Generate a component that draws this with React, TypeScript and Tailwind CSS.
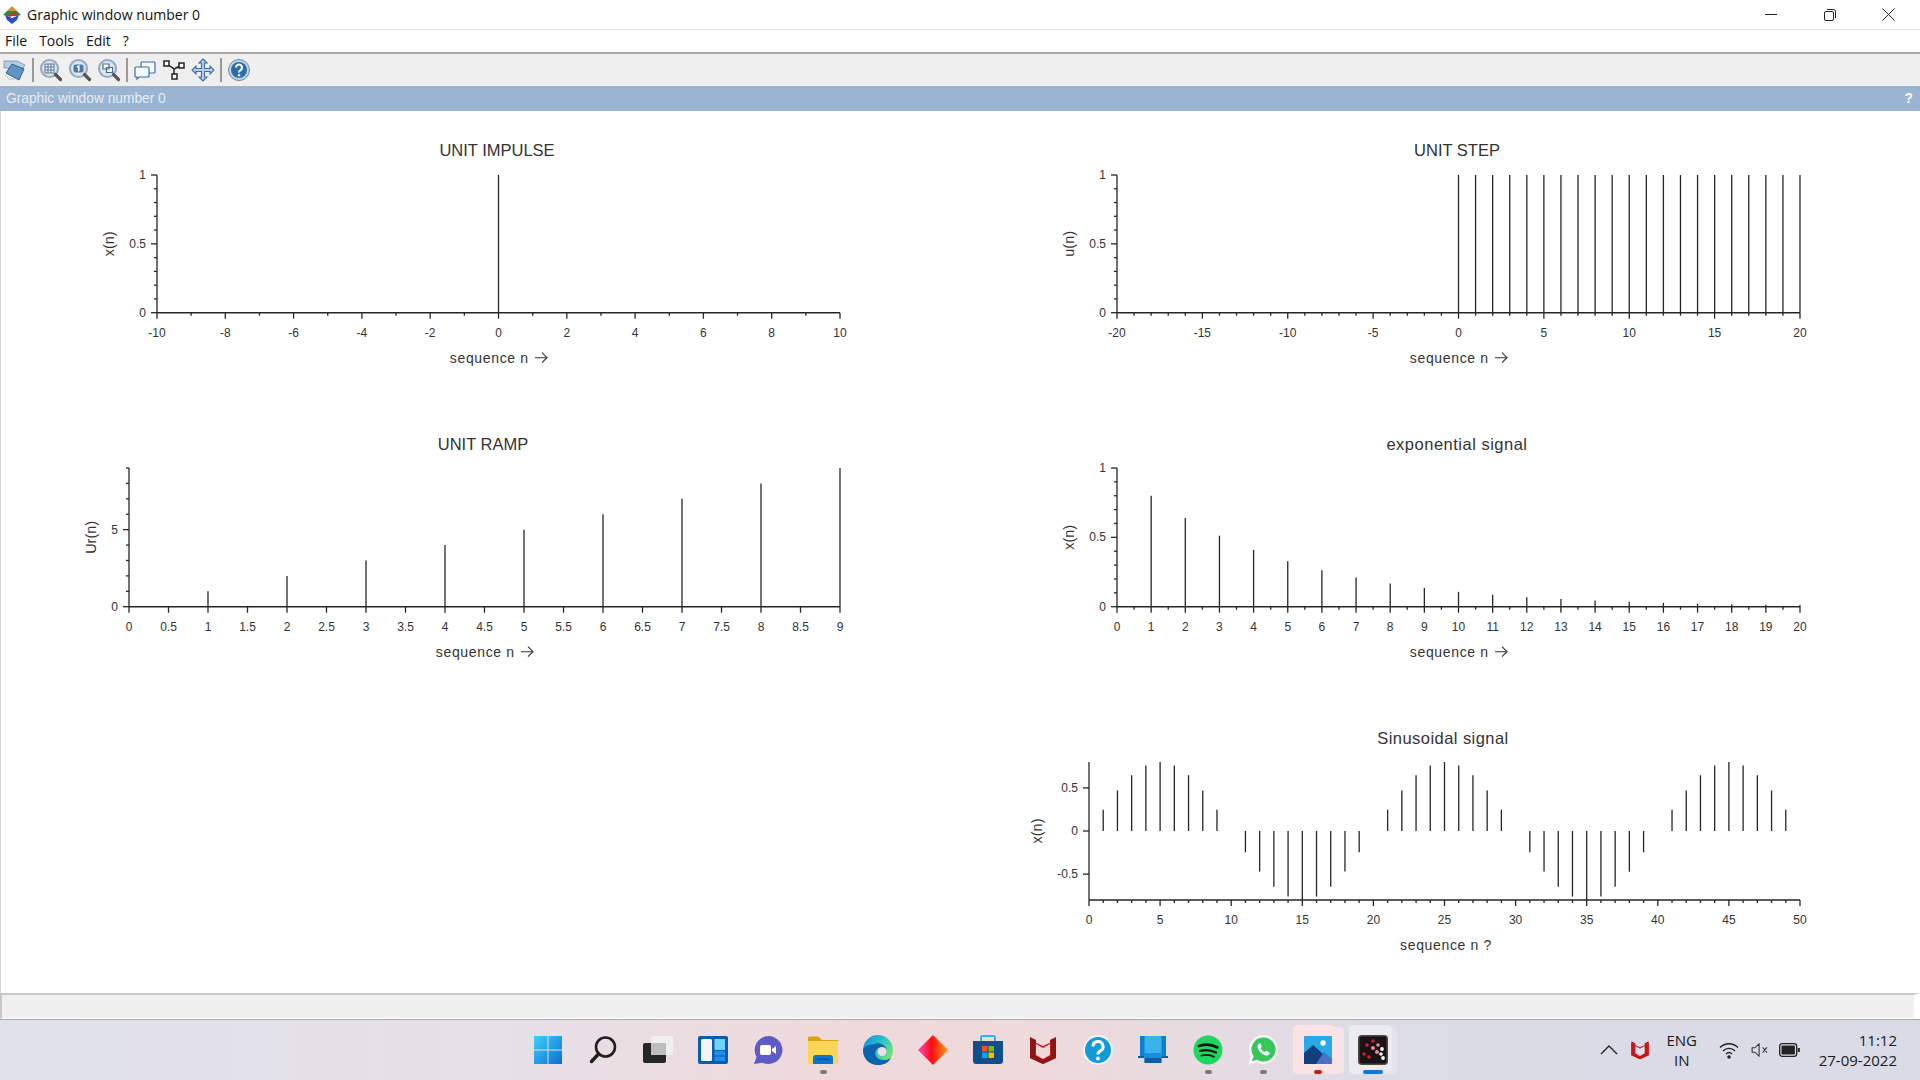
const SANS = '"Liberation Sans", Arial, sans-serif'

type Tick = { v: number; label?: string }

type Chart = {
  title: string
  titleX: number
  titleSpacing?: number
  xLabel: string
  xLabelX: number
  yLabel: string
  yLabelX: number
  x0: number
  x1: number
  xMin: number
  xMax: number
  xTicks: Tick[]
  yTop: number
  yBottom: number
  yMin: number
  yMax: number
  yTicks: Tick[]
  stems: [number, number][]
}

// every chart is drawn in a 960x294 cell, coordinates are local to the cell
function ticks(from: number, to: number, step: number, labelEvery: number): Tick[] {
  const out: Tick[] = []
  const n = Math.round((to - from) / step)
  for (let i = 0; i <= n; i++) {
    const v = from + i * step
    out.push(i % labelEvery === 0 ? { v, label: String(Math.round(v * 100) / 100) } : { v })
  }
  return out
}

function range(a: number, b: number) {
  const out: number[] = []
  for (let i = a; i <= b; i++) out.push(i)
  return out
}

const CHARTS: (Chart | null)[] = [
  {
    title: 'UNIT IMPULSE',
    titleX: 497,
    xLabel: 'sequence n',
    xLabelX: 498,
    yLabel: 'x(n)',
    yLabelX: 114,
    x0: 157,
    x1: 840,
    xMin: -10,
    xMax: 10,
    xTicks: ticks(-10, 10, 1, 2),
    yTop: 62,
    yBottom: 199.7,
    yMin: 0,
    yMax: 1,
    yTicks: ticks(0, 1, 0.1, 5),
    stems: [[0, 1]],
  },
  {
    title: 'UNIT STEP',
    titleX: 497,
    xLabel: 'sequence n',
    xLabelX: 498,
    yLabel: 'u(n)',
    yLabelX: 114,
    x0: 157,
    x1: 840,
    xMin: -20,
    xMax: 20,
    xTicks: ticks(-20, 20, 1, 5),
    yTop: 62,
    yBottom: 199.7,
    yMin: 0,
    yMax: 1,
    yTicks: ticks(0, 1, 0.1, 5),
    stems: range(0, 20).map(n => [n, 1] as [number, number]),
  },
  {
    title: 'UNIT RAMP',
    titleX: 483,
    xLabel: 'sequence n',
    xLabelX: 484,
    yLabel: 'Ur(n)',
    yLabelX: 96,
    x0: 129,
    x1: 840,
    xMin: 0,
    xMax: 9,
    xTicks: ticks(0, 9, 0.5, 1),
    yTop: 61,
    yBottom: 199.7,
    yMin: 0,
    yMax: 9,
    yTicks: ticks(0, 9, 1, 5).map(t => (t.v > 5 ? { v: t.v } : t)),
    stems: range(1, 9).map(n => [n, n] as [number, number]),
  },
  {
    title: 'exponential signal',
    titleX: 497,
    titleSpacing: 0.5,
    xLabel: 'sequence n',
    xLabelX: 498,
    yLabel: 'x(n)',
    yLabelX: 114,
    x0: 157,
    x1: 840,
    xMin: 0,
    xMax: 20,
    xTicks: ticks(0, 20, 0.5, 2),
    yTop: 61,
    yBottom: 199.7,
    yMin: 0,
    yMax: 1,
    yTicks: ticks(0, 1, 0.1, 5),
    stems: range(1, 20).map(n => [n, Math.pow(0.8, n)] as [number, number]),
  },
  null,
  {
    title: 'Sinusoidal signal',
    titleX: 483,
    titleSpacing: 0.45,
    xLabel: 'sequence n ?',
    xLabelX: 486,
    yLabel: 'x(n)',
    yLabelX: 82,
    x0: 129,
    x1: 840,
    xMin: 0,
    xMax: 50,
    xTicks: ticks(0, 50, 1, 5),
    yTop: 61,
    yBottom: 199,
    yMin: -0.8,
    yMax: 0.8,
    yTicks: [{ v: -0.5, label: '-0.5' }, { v: 0, label: '0' }, { v: 0.5, label: '0.5' }],
    stems: range(1, 49)
      .filter(n => n % 10 !== 0)
      .map(n => [n, 0.8 * Math.sin((2 * Math.PI * n) / 20)] as [number, number]),
  },
]

function Plot({ c }: { c: Chart }) {
  const sx = (v: number) => c.x0 + ((v - c.xMin) / (c.xMax - c.xMin)) * (c.x1 - c.x0)
  const sy = (v: number) => c.yBottom - ((v - c.yMin) / (c.yMax - c.yMin)) * (c.yBottom - c.yTop)
  const zeroY = sy(Math.max(0, c.yMin))
  const labelY = c.yBottom + 40.5
  const arrow = c.xLabel.endsWith('n')
  const labelCx = c.xLabelX
  return (
    <svg width="960" height="294" viewBox="0 0 960 294" className="block" style={{ fontFamily: SANS }}>
      <text x={c.titleX} y="43" textAnchor="middle" fontSize="16.5" letterSpacing={c.titleSpacing ?? 0} fill="#333">
        {c.title}
      </text>
      <text
        transform={`translate(${c.yLabelX} ${(c.yTop + c.yBottom) / 2}) rotate(-90)`}
        textAnchor="middle"
        fontSize="14.5"
        fill="#333"
      >
        {c.yLabel}
      </text>
      <g stroke="#262626" strokeWidth="1.3" fill="none">
        <line x1={c.x0} y1={c.yTop} x2={c.x0} y2={c.yBottom} />
        <line x1={c.x0} y1={c.yBottom} x2={c.x1} y2={c.yBottom} strokeWidth="1.6" />
        {c.xTicks.map(t => (
          <line key={t.v} x1={sx(t.v)} y1={c.yBottom} x2={sx(t.v)} y2={c.yBottom + (t.label ? 6 : 3)} />
        ))}
        {c.yTicks.map(t => (
          <line key={t.v} x1={c.x0} y1={sy(t.v)} x2={c.x0 - (t.label ? 6 : 3)} y2={sy(t.v)} />
        ))}
        {c.stems.map(([x, y]) => (
          <line key={x} x1={sx(x)} y1={zeroY} x2={sx(x)} y2={sy(y)} />
        ))}
      </g>
      <g fontSize="12" fill="#333">
        {c.xTicks
          .filter(t => t.label)
          .map(t => (
            <text key={t.v} x={sx(t.v)} y={c.yBottom + 24} textAnchor="middle">
              {t.label}
            </text>
          ))}
        {c.yTicks
          .filter(t => t.label)
          .map(t => (
            <text key={t.v} x={c.x0 - 11} y={sy(t.v) + 4} textAnchor="end">
              {t.label}
            </text>
          ))}
      </g>
      <text
        x={arrow ? labelCx - 8.7 : labelCx}
        y={labelY + 9.5}
        textAnchor="middle"
        fontSize="14"
        letterSpacing="0.65"
        fill="#333"
      >
        {c.xLabel}
      </text>
      {arrow && (
        <g stroke="#333" strokeWidth="1.1" fill="none">
          <path d={`M${labelCx + 37} ${labelY + 4.5}h12M${labelCx + 44} ${labelY - 0.5}l5 5-5 5`} />
        </g>
      )}
    </svg>
  )
}

function ToolbarIcon({ kind }: { kind: string }) {
  if (kind === 'rotate')
    return (
      <svg width="24" height="24" viewBox="0 0 24 24">
        <path d="M1 3h13l8 4-2 3H1z" fill="#b9cde0" stroke="#6f8fb0" strokeWidth="0.8" />
        <path d="M9 6l12 5-5 11L3 15z" fill="#5f93c4" stroke="#2f628f" />
        <path d="M2 17l4 4h6" stroke="#a9bdd1" fill="none" />
      </svg>
    )
  if (kind === 'windows')
    return (
      <svg width="24" height="24" viewBox="0 0 24 24" fill="#f6f9fc" stroke="#3b6fa3" strokeWidth="1.2">
        <rect x="8" y="4" width="14" height="11" rx="1" />
        <path d="M3 9h12a1 1 0 0 1 1 1v8a1 1 0 0 1-1 1H6l-2 2v-2H3a1 1 0 0 1-1-1v-8a1 1 0 0 1 1-1z" />
      </svg>
    )
  if (kind === 'nodes')
    return (
      <svg width="24" height="24" viewBox="0 0 24 24" fill="#fff" stroke="#222" strokeWidth="1.5">
        <path d="M5 6l7 5v7M12 11l8-4" fill="none" />
        <rect x="2" y="3" width="5" height="5" />
        <rect x="17" y="5" width="5" height="5" />
        <rect x="10" y="16" width="5" height="5" />
      </svg>
    )
  if (kind === 'move')
    return (
      <svg width="24" height="24" viewBox="0 0 24 24" fill="#b8cfe6" stroke="#3b6fa3" strokeWidth="1.1">
        <path d="M12 1l4 4h-2.500v5.500H19V8l4 4-4 4v-2.500h-5.500V19H16l-4 4-4-4h2.500v-5.500H5V16l-4-4 4-4v2.500h5.500V5H8z" />
      </svg>
    )
  if (kind === 'help')
    return (
      <svg width="24" height="24" viewBox="0 0 24 24">
        <circle cx="12" cy="12" r="10.500" fill="#c4d3e3" stroke="#6d8cab" />
        <circle cx="12" cy="12" r="8" fill="#2e6da8" />
        <path d="M9 9.500a3 3 0 1 1 4.500 2.600c-1 .6-1.500 1.100-1.500 2.400" stroke="#fff" strokeWidth="2" fill="none" />
        <circle cx="12" cy="17.300" r="1.200" fill="#fff" />
      </svg>
    )
  return (
    <svg width="24" height="24" viewBox="0 0 24 24">
      <circle cx="10.500" cy="10.500" r="8.500" fill="#dce6f0" stroke="#9aabbd" strokeWidth="2.200" />
      <path d="M16.500 16.500l5 5" stroke="#555" strokeWidth="3.200" strokeLinecap="round" />
      {kind === 'zoomGrid' && (
        <path d="M6 6h9v9H6zM9 6v9M12 6v9M6 9h9M6 12h9" fill="#eef3f8" stroke="#4c6c90" strokeWidth="0.900" />
      )}
      {kind === 'zoomOne' && (
        <>
          <rect x="5.500" y="6.500" width="10" height="8" rx="2" fill="#4f7aa6" />
          <path d="M9 9l1.800-.8v5" stroke="#fff" strokeWidth="1.500" fill="none" />
        </>
      )}
      {kind === 'zoomWin' && <path d="M6 6h6v5H6zM9.500 9.500h6v5h-6z" fill="#fff" stroke="#4c6c90" strokeWidth="1.200" />}
    </svg>
  )
}

function Sep() {
  return <div className="h-[24px] w-[2px] bg-[#9a9a9a]" />
}

function TaskIcon({ kind }: { kind: string }) {
  switch (kind) {
    case 'start':
      return (
        <svg width="30" height="30" viewBox="0 0 30 30">
          <defs>
            <linearGradient id="st" x1="0" y1="0" x2="1" y2="1">
              <stop offset="0" stopColor="#3fd0fb" />
              <stop offset="1" stopColor="#0a6fd0" />
            </linearGradient>
          </defs>
          <path d="M1 1h13.500v13.500H1zM15.500 1H29v13.500H15.500zM1 15.500h13.500V29H1zM15.500 15.500H29V29H15.500z" fill="url(#st)" />
        </svg>
      )
    case 'search':
      return (
        <svg width="30" height="30" viewBox="0 0 30 30" fill="none" stroke="#1f1f1f">
          <circle cx="17.500" cy="12" r="9.500" strokeWidth="2.600" />
          <path d="M10.500 19L3.500 26.500" strokeWidth="3.400" strokeLinecap="round" />
        </svg>
      )
    case 'taskview':
      return (
        <svg width="30" height="30" viewBox="0 0 30 30">
          <rect x="8" y="1" width="22" height="19" rx="2" fill="#efefef" />
          <rect x="0" y="8" width="23" height="20" rx="2" fill="#262626" />
          <rect x="8" y="8" width="15" height="12" fill="#bdbdbd" />
        </svg>
      )
    case 'widgets':
      return (
        <svg width="30" height="28" viewBox="0 0 30 28">
          <rect width="30" height="28" rx="2" fill="#0b5cad" />
          <rect x="3" y="3" width="11" height="22" rx="1.500" fill="#f4f4f4" />
          <rect x="16.500" y="3" width="10.500" height="11" fill="#6ed3fb" />
          <rect x="16.500" y="15" width="10.500" height="4.500" fill="#1e90ea" />
          <rect x="16.500" y="20.500" width="10.500" height="4.500" fill="#1e90ea" />
        </svg>
      )
    case 'chat':
      return (
        <svg width="30" height="30" viewBox="0 0 30 30">
          <path d="M15.500 1a14 14 0 1 1-6 26.700L1 29l2.500-7A14 14 0 0 1 15.500 1z" fill="#5e5bc8" />
          <rect x="7" y="10" width="11" height="10" rx="2" fill="#fff" />
          <path d="M19 14l4-3v8l-4-3z" fill="#fff" />
        </svg>
      )
    case 'explorer':
      return (
        <svg width="30" height="28" viewBox="0 0 30 28">
          <path d="M0 2a1.500 1.500 0 0 1 1.500-1.500h9L14 4h16v5H0z" fill="#e0a30c" />
          <rect y="5" width="30" height="23" rx="1" fill="#fbd558" />
          <path d="M5 28v-6a3 3 0 0 1 3-3h14a3 3 0 0 1 3 3v6z" fill="#0a76cf" />
          <rect x="9" y="22.500" width="12" height="1.500" fill="#0a4f95" />
        </svg>
      )
    case 'edge':
      return (
        <svg width="30" height="30" viewBox="0 0 30 30">
          <defs>
            <linearGradient id="ed" x1="0" y1="0" x2="1" y2="0.600">
              <stop offset="0" stopColor="#0c8fdc" />
              <stop offset="0.600" stopColor="#30c4c4" />
              <stop offset="1" stopColor="#7be36c" />
            </linearGradient>
          </defs>
          <circle cx="15" cy="15" r="15" fill="url(#ed)" />
          <path d="M0 15c0 9 7 15 15 15 6 0 10-2 13-7-3 2-8 3-12 1-4-2-5-7-2-10 3-2 8-2 10 1-2-6-8-8-13-6C5 10 1 11 0 15z" fill="#0b62ad" />
          <circle cx="19" cy="16.500" r="4.500" fill="#e8e0e6" />
        </svg>
      )
    case 'diamond':
      return (
        <svg width="30" height="30" viewBox="0 0 30 30">
          <defs>
            <linearGradient id="dm" x1="0" y1="0" x2="1" y2="0">
              <stop offset="0" stopColor="#f052c0" />
              <stop offset="0.450" stopColor="#ff0a14" />
              <stop offset="1" stopColor="#ff9b10" />
            </linearGradient>
          </defs>
          <path d="M15 0l15 15-15 15L0 15z" fill="url(#dm)" />
        </svg>
      )
    case 'store':
      return (
        <svg width="30" height="30" viewBox="0 0 30 30">
          <path d="M8 6V2.500A1.500 1.500 0 0 1 9.500 1h11A1.500 1.500 0 0 1 22 2.500V6" fill="none" stroke="#2bb6ea" strokeWidth="2" />
          <path d="M0 6h30v20a3 3 0 0 1-3 3H3a3 3 0 0 1-3-3z" fill="#0f4f8c" />
          <rect x="9" y="11" width="5.500" height="5.500" fill="#f25022" />
          <rect x="15.500" y="11" width="5.500" height="5.500" fill="#7fba00" />
          <rect x="9" y="17.500" width="5.500" height="5.500" fill="#00a4ef" />
          <rect x="15.500" y="17.500" width="5.500" height="5.500" fill="#ffb900" />
        </svg>
      )
    case 'mcafee':
      return <McAfee size={30} dark />
    case 'help':
      return (
        <svg width="30" height="30" viewBox="0 0 30 30">
          <circle cx="15" cy="15" r="15" fill="#f3f3f6" />
          <circle cx="15" cy="15" r="13" fill="#129ad6" />
          <path d="M10 11.500a5 5 0 1 1 7.500 4.300c-1.700 1-2.500 1.700-2.500 3.700" fill="none" stroke="#fff" strokeWidth="3" />
          <circle cx="15" cy="23.500" r="1.900" fill="#fff" />
        </svg>
      )
    case 'phone':
      return (
        <svg width="30" height="30" viewBox="0 0 30 30">
          <rect x="2" y="1" width="26" height="20" fill="#0b7fd4" />
          <rect x="0" y="21" width="30" height="2" fill="#0a5ea6" />
          <rect x="6.500" y="1" width="17" height="27" rx="1.500" fill="#39b3ea" />
          <rect x="6.500" y="18" width="17" height="5" fill="#1a8edc" />
          <rect x="6.500" y="23" width="17" height="5" fill="#0a5ea6" />
        </svg>
      )
    case 'spotify':
      return (
        <svg width="30" height="30" viewBox="0 0 30 30">
          <circle cx="15" cy="15" r="14.500" fill="#1ed760" />
          <g fill="none" stroke="#111" strokeLinecap="round">
            <path d="M6 11c6-2 13-1.500 18.500 1.500" strokeWidth="2.600" />
            <path d="M7 16c5-1.500 11-1 16 1.500" strokeWidth="2.200" />
            <path d="M8.500 20.500c4-1 9-.8 12.500 1.200" strokeWidth="1.800" />
          </g>
        </svg>
      )
    case 'whatsapp':
      return (
        <svg width="30" height="30" viewBox="0 0 30 30">
          <path d="M15.500 0a14.500 14.500 0 1 1-7 27.200L0 30l2.800-8.200A14.500 14.500 0 0 1 15.500 0z" fill="#f4f4f6" />
          <path d="M15.500 2.500a12 12 0 1 1-6.300 22.200L4 26.200l1.600-5A12 12 0 0 1 15.500 2.500z" fill="#35c75a" />
          <path d="M11 8.500c-1.500 1-2 3-1 5.300 1.400 3 3.700 5.200 6.700 6.400 2.300.8 4 .2 5-1.500l-.4-1.500-3-1.500-1.400 1.500c-2-.8-3.400-2.200-4.300-4.200l1.200-1.400-1.200-3.100z" fill="#fff" />
        </svg>
      )
    case 'photos':
      return (
        <svg width="28" height="28" viewBox="0 0 28 28">
          <rect width="28" height="28" rx="1" fill="#2aa9e8" />
          <circle cx="19" cy="7" r="2.700" fill="#fff" />
          <path d="M0 28V17l9-8 10 9-5 10z" fill="#113f7d" />
          <path d="M12 28l8-12 8 7v5z" fill="#4a72c4" />
        </svg>
      )
    default:
      return (
        <svg width="30" height="30" viewBox="0 0 30 30">
          <rect x="0.800" y="0.800" width="28.400" height="28.400" rx="3" fill="#1a1214" stroke="#4a4a4a" strokeWidth="1.600" />
          <g fill="#c8242c">
            <circle cx="15" cy="6" r="1.800" />
            <circle cx="9" cy="10" r="1.800" />
            <circle cx="6" cy="19" r="1.800" />
            <circle cx="11" cy="22" r="1.800" />
          </g>
          <g fill="#e78a99">
            <circle cx="15" cy="13" r="2" />
            <circle cx="20" cy="10" r="1.800" />
            <circle cx="19" cy="17" r="2" />
          </g>
          <g fill="#fff">
            <circle cx="24" cy="14" r="1.900" />
            <circle cx="23" cy="19" r="1.800" />
            <circle cx="25" cy="23" r="1.900" />
          </g>
        </svg>
      )
  }
}

function McAfee({ size, dark }: { size: number; dark?: boolean }) {
  return (
    <svg width={size} height={size} viewBox="0 0 30 30">
      <path d="M2 5l13 6 13-6v18l-13 6-13-6z" fill="#c8161d" />
      <path d="M2 2l6 3v3H7v13l8 4v4l-13-6zM28 2l-6 3v3h1v13l-8 4v4l13-6z" fill={dark ? '#8c1515' : '#c8161d'} />
      <path d="M8 9l7 4 7-4v11l-7 4-7-4z" fill={dark ? '#efd8d8' : '#dfe0ea'} />
    </svg>
  )
}

const TASK_ITEMS: { kind: string; dot?: string; tile?: string; sliver?: string }[] = [
  { kind: 'start' },
  { kind: 'search' },
  { kind: 'taskview' },
  { kind: 'widgets' },
  { kind: 'chat' },
  { kind: 'explorer', dot: 'w-[7px] bg-[#7a7a7a]' },
  { kind: 'edge' },
  { kind: 'diamond' },
  { kind: 'store' },
  { kind: 'mcafee' },
  { kind: 'help' },
  { kind: 'phone' },
  { kind: 'spotify', dot: 'w-[7px] bg-[#7a7a7a]' },
  { kind: 'whatsapp', dot: 'w-[7px] bg-[#7a7a7a]' },
  {
    kind: 'photos',
    dot: 'w-[8px] bg-[#c4211c]',
    tile: 'left-[2px] bg-[#fbe3e5]',
    sliver: 'left-[2px] w-[51px] bg-[#f6e4e6]',
  },
  {
    kind: 'scilab',
    dot: 'w-[20px] bg-[#0f78d4]',
    tile: 'left-[3px] bg-[#ecebf1]',
    sliver: 'left-[3px] w-[48px] bg-[#e5e4ec]',
  },
]

export default function App() {
  return (
    <div className="flex h-[1080px] w-[1920px] flex-col overflow-hidden bg-white" style={{ fontFamily: SANS }}>
      {/* Title bar */}
      <div className="flex h-[29px] shrink-0 items-center" style={{ fontFamily: '"Open Sans", sans-serif' }}>
        <svg width="18" height="18" viewBox="0 0 18 18" className="ml-[3px]">
          <path d="M9 0l5 5H4z" fill="#d8912a" />
          <path d="M4 5h10l4 4-4 1H4L0 9z" fill="#2b8a3e" />
          <path d="M2 9l7 3 7-3-2 5-5 4-5-4z" fill="#2a4fc0" />
          <path d="M5 9l8-3 1 3-8 2z" fill="#d62a2a" />
        </svg>
        <span className="ml-[6px] text-[14px] leading-none text-[#111]">Graphic window number 0</span>
        <div className="ml-auto flex items-center pr-[2px]">
          <div className="flex h-[29px] w-[59px] items-center justify-center">
            <svg width="12" height="12" viewBox="0 0 12 12" stroke="#222" fill="none">
              <path d="M0 5.500h12" />
            </svg>
          </div>
          <div className="flex h-[29px] w-[59px] items-center justify-center">
            <svg width="12" height="12" viewBox="0 0 12 12" stroke="#222" fill="none">
              <rect x="0.500" y="2.500" width="9" height="9" rx="1.500" />
              <path d="M3 0.500h6.500a2 2 0 0 1 2 2V9" />
            </svg>
          </div>
          <div className="flex h-[29px] w-[59px] items-center justify-center">
            <svg width="13" height="13" viewBox="0 0 13 13" stroke="#222" fill="none">
              <path d="M0.500 0.500l12 12M12.500 0.500l-12 12" />
            </svg>
          </div>
        </div>
      </div>

      {/* Menu bar */}
      <div
        className="flex h-[23px] shrink-0 items-center gap-[12px] border-t border-[#e3e3e3] pb-[2px] pl-[5px] text-[14px] text-[#111]"
        style={{ fontFamily: '"Open Sans", sans-serif' }}
      >
        <span>File</span>
        <span>Tools</span>
        <span>Edit</span>
        <span>?</span>
      </div>

      {/* Toolbar */}
      <div className="flex h-[34px] shrink-0 items-center gap-[5px] border-t-2 border-[#a8a8a8] bg-[#efefef] pl-[3px]">
        <ToolbarIcon kind="rotate" />
        <Sep />
        <ToolbarIcon kind="zoomGrid" />
        <ToolbarIcon kind="zoomOne" />
        <ToolbarIcon kind="zoomWin" />
        <Sep />
        <ToolbarIcon kind="windows" />
        <ToolbarIcon kind="nodes" />
        <ToolbarIcon kind="move" />
        <Sep />
        <ToolbarIcon kind="help" />
      </div>

      {/* Dock title */}
      <div className="flex h-[25px] shrink-0 items-center justify-between bg-[#9ab4d2] pl-[6px] pr-[7px] pt-[2px] text-[13.75px] text-[#e6edf5]">
        <span>Graphic window number 0</span>
        <span className="font-bold text-white">?</span>
      </div>

      {/* Plots */}
      <div className="grid min-h-0 flex-1 grid-cols-[960px_960px] grid-rows-[294px_294px_294px] content-start overflow-hidden pt-[2px] shadow-[inset_1px_0_0_#d5d5d5]">
        {CHARTS.map((c, i) => (
          <div key={i} className="h-[294px] w-[960px]">
            {c && <Plot c={c} />}
          </div>
        ))}
      </div>

      {/* Status bar */}
      <div className="h-[26px] shrink-0 border-b border-b-white border-l-2 border-l-[#c8c8c8] border-r-[6px] border-r-white border-t-2 border-t-[#c8c8c8] bg-[#f0f0f0]" />

      {/* Taskbar */}
      <div className="relative flex h-[61px] shrink-0 items-center justify-center border-t border-[#a8a8a8] bg-[linear-gradient(90deg,#dfe1ea_0%,#e6e0e8_25%,#f0d9da_45%,#eedadc_55%,#dcdce6_72%,#d9dbe6_100%)]">
        <div className="ml-[1px] flex">
          {TASK_ITEMS.map(t => (
            <div key={t.kind} className="relative flex h-[60px] w-[55px] items-center justify-center">
              {t.sliver && <div className={`absolute top-[7px] h-[47px] rounded-[5px] ${t.sliver}`} />}
              {t.tile && <div className={`absolute top-[5px] h-[49px] w-[43px] rounded-[5px] ${t.tile}`} />}
              <div className="relative">
                <TaskIcon kind={t.kind} />
              </div>
              {t.dot && <div className={`absolute bottom-[6px] h-[4px] rounded-full ${t.dot}`} />}
            </div>
          ))}
        </div>
        <div
          className="absolute right-[23px] top-0 flex h-[60px] items-center text-[#1b1b1b]"
          style={{ fontFamily: '"Open Sans", sans-serif' }}
        >
          <svg width="18" height="12" viewBox="0 0 18 12" fill="none" stroke="#222" strokeWidth="1.300">
            <path d="M1 10l8-8 8 8" />
          </svg>
          <div className="ml-[12px]">
            <McAfee size={20} />
          </div>
          <div className="ml-[14px] flex w-[36px] flex-col items-center text-[15px] leading-[20px]">
            <span>ENG</span>
            <span>IN</span>
          </div>
          <svg width="20" height="20" viewBox="0 0 20 20" fill="none" stroke="#222" strokeWidth="1.300" className="ml-[19px]">
            <path d="M1 7.500c5-5 13-5 18 0M4 11c3.500-3.500 8.500-3.500 12 0M7 14c1.800-1.800 4.200-1.800 6 0" />
            <circle cx="10" cy="17" r="1.100" fill="#222" />
          </svg>
          <svg width="18" height="14" viewBox="0 0 20 16" fill="none" stroke="#333" strokeWidth="1.200" className="ml-[12px]">
            <path d="M1 5.500h3l5-4.500v14l-5-4.500H1zM13 5l5 6M18 5l-5 6" />
          </svg>
          <svg width="21" height="14" viewBox="0 0 21 14" className="ml-[10px]">
            <rect x="0.700" y="0.700" width="17" height="12.600" rx="2.500" fill="none" stroke="#222" strokeWidth="1.300" />
            <rect x="2.500" y="2.500" width="13.400" height="9" rx="1" fill="#222" />
            <rect x="18.800" y="5" width="2" height="4" fill="#222" />
          </svg>
          <div className="ml-[19px] flex flex-col items-end text-[15px] leading-[20px]">
            <span>11:12</span>
            <span>27-09-2022</span>
          </div>
        </div>
      </div>
    </div>
  )
}
